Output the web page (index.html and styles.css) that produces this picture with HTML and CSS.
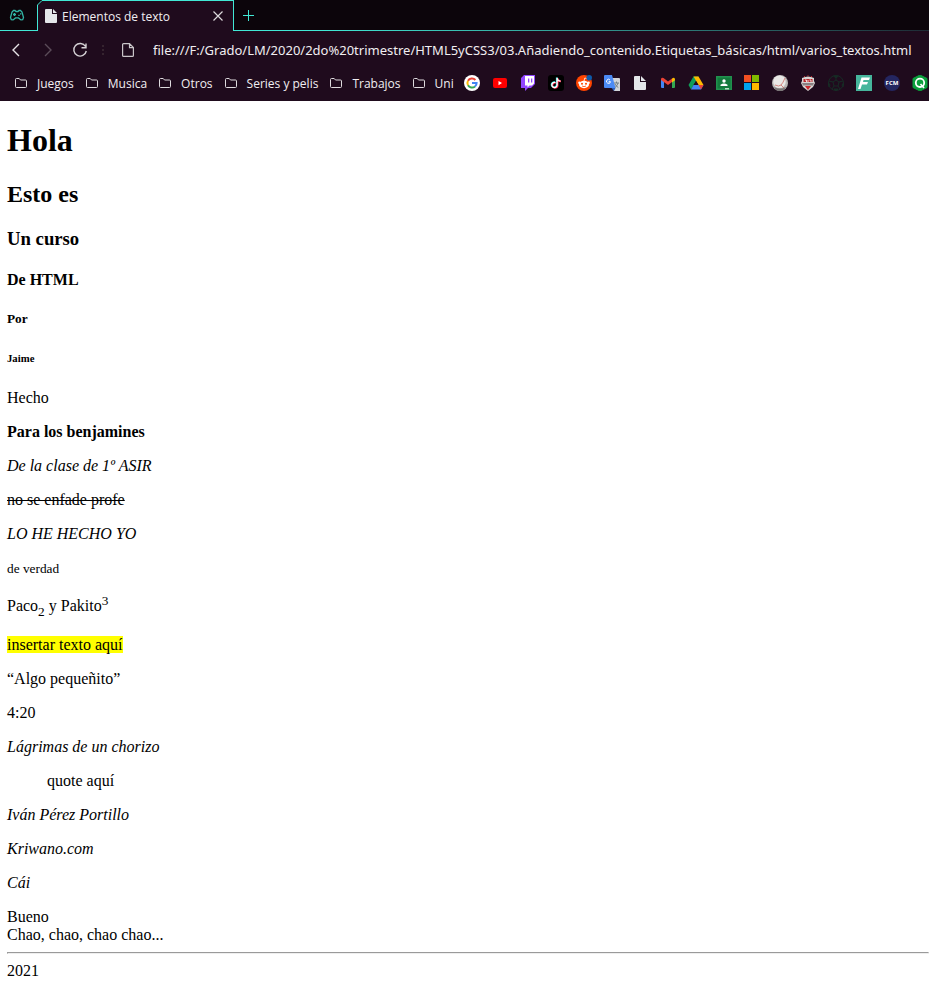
FILE: index.html
```html
<!DOCTYPE html>
<html lang="es">
<head>
<meta charset="utf-8">
<title>Elementos de texto</title>
<link rel="stylesheet" href="styles.css">
</head>
<body>
<header class="browser">
  <div class="tabs">
    <button class="corner" aria-label="GX Corner">
      <svg width="16" height="16" viewBox="0 0 16 16" fill="none" stroke="#32b5a5" stroke-width="1.3"><path d="M4.500 2.500H6l1 1h2l1-1h1.500l1.500 1.500 1.500 5.500-.8 2.200-1.800.2-2.400-2h-3l-2.400 2-1.800-.2L1.500 9.500 3 4z"/><path d="M4 6.500h3M5.500 5v3M9.300 7.300h1.400M11 5.800h1.400"/></svg>
    </button>
    <div class="tab">
      <svg class="slant" width="6" height="6" viewBox="0 0 6 6"><path d="M0 0h6L0 6z" fill="#0c050b"/><path d="M.5 6V5L5 .5h1" fill="none" stroke="#41e8d5"/></svg>
      <svg width="12" height="14" viewBox="0 0 12 14"><path d="M0 1q0-1 1-1h6v5h5v8q0 1-1 1H1q-1 0-1-1zM8 0l4 4H8z" fill="#e4e7ea"/></svg>
      <span class="tab-title">Elementos de texto</span>
      <button aria-label="Cerrar"><svg width="10" height="10" viewBox="0 0 10 10"><path d="M.5.5l9 9M9.500.5l-9 9" stroke="#dcd9dc" stroke-width="1.2"/></svg></button>
    </div>
    <button class="plus" aria-label="Nueva pestaña"><svg width="12" height="12" viewBox="0 0 12 12"><path d="M0 5.500h11M5.500 0v11" stroke="#41e8d5"/></svg></button>
  </div>
  <div class="toolbar">
    <button aria-label="Atrás"><svg width="16" height="16" viewBox="0 0 16 16" fill="none" stroke="#e6e3e6" stroke-width="1.4"><path d="M11 2L5 8l6 6"/></svg></button>
    <button aria-label="Adelante"><svg width="16" height="16" viewBox="0 0 16 16" fill="none" stroke="#5b4c59" stroke-width="1.4"><path d="M5 2l6 6-6 6"/></svg></button>
    <button aria-label="Recargar"><svg width="16" height="16" viewBox="0 0 16 16" fill="none" stroke="#d5d2d5" stroke-width="1.4"><path d="M13.500 4.500A6.300 6.300 0 1 0 14.300 9M14 1.500v4.300H9.500"/></svg></button>
    <svg class="dots" width="2" height="10" viewBox="0 0 2 10"><path d="M0 0h2v2H0zM0 4h2v2H0zM0 8h2v2H0z" fill="#35242f"/></svg>
    <svg width="12" height="14" viewBox="0 0 12 14" fill="none" stroke="#c9c5c9" stroke-width="1.200"><path d="M7.500.6H1.600q-1 0-1 1v10.800q0 1 1 1h8.800q1 0 1-1V4.500zM7.500.6v4h4"/></svg>
    <input class="url" type="text" aria-label="Dirección" value="file:///F:/Grado/LM/2020/2do%20trimestre/HTML5yCSS3/03.Añadiendo_contenido.Etiquetas_básicas/html/varios_textos.html">
  </div>
  <nav class="bookmarks" aria-label="Marcadores">
    <svg hidden><symbol id="folder" viewBox="0 0 12 10"><path d="M.5 8.500v-7q0-1 1-1h2.700l1.300 1.500h5q1 0 1 1v5.500q0 1-1 1h-9q-1 0-1-1z" fill="none" stroke="#dedbde"/></symbol></svg>
    <div class="folders">
      <a href="#"><svg width="12" height="10"><use href="#folder"/></svg>Juegos</a>
      <a href="#"><svg width="12" height="10"><use href="#folder"/></svg>Musica</a>
      <a href="#"><svg width="12" height="10"><use href="#folder"/></svg>Otros</a>
      <a href="#"><svg width="12" height="10"><use href="#folder"/></svg>Series y pelis</a>
      <a href="#"><svg width="12" height="10"><use href="#folder"/></svg>Trabajos</a>
      <a href="#"><svg width="12" height="10"><use href="#folder"/></svg>Uni</a>
    </div>
    <div class="sites">
      <a href="#" aria-label="Google"><svg width="16" height="16" viewBox="0 0 16 16" fill="none" stroke-width="2"><circle cx="8" cy="8" r="8" fill="#fff"/><path d="M11.400 5A4.600 4.600 0 0 0 4 5.800" stroke="#ea4335"/><path d="M4 5.800a4.600 4.600 0 0 0 0 4.400" stroke="#fbbc05"/><path d="M4 10.200a4.600 4.600 0 0 0 7 1.300" stroke="#34a853"/><path d="M11 11.500A4.600 4.600 0 0 0 12.600 8H8" stroke="#4285f4"/></svg></a>
      <a href="#" aria-label="YouTube"><svg width="16" height="16" viewBox="0 0 16 16"><rect x="1" y="3" width="14" height="10" rx="2" fill="#f00"/><path d="M6.500 6v4.200L10 8z" fill="#fff"/></svg></a>
      <a href="#" aria-label="Twitch"><svg width="16" height="16" viewBox="0 0 16 16"><path d="M4 0h11v9l-4 4H8l-3 3v-3H1V3z" fill="#9146ff"/><path d="M5 1h9v7.500L12 10.500H9.500L7.500 12.500v-2H5z" fill="#fff"/><path d="M8 3.500h1.300v4H8zM11 3.500h1.300v4H11z" fill="#9146ff"/></svg></a>
      <a href="#" aria-label="TikTok"><svg width="16" height="16" viewBox="0 0 16 16" fill="none" stroke-width="1.600"><rect width="16" height="16" rx="3" fill="#000"/><path d="M7 7.200a2.600 2.600 0 1 0 1.700 2.500V2.500c0 2 1.300 3.200 3.300 3.200" stroke="#25f4ee"/><path d="M8 7.900a2.600 2.600 0 1 0 1.700 2.500V3.200c0 2 1.300 3.200 3.300 3.200" stroke="#fe2c55"/><path d="M7.400 7.500a2.600 2.600 0 1 0 1.700 2.500V2.800c0 2 1.300 3.200 3.300 3.200" stroke="#fff" stroke-width="1.300"/></svg></a>
      <a href="#" aria-label="Reddit"><svg width="16" height="16" viewBox="0 0 16 16"><circle cx="8" cy="8" r="8" fill="#ff4500"/><circle cx="3.500" cy="7.800" r="1.300" fill="#fff"/><circle cx="12.500" cy="7.800" r="1.300" fill="#fff"/><ellipse cx="8" cy="9.500" rx="5" ry="3.700" fill="#fff"/><circle cx="6" cy="8.700" r="1" fill="#ff4500"/><circle cx="10" cy="8.700" r="1" fill="#ff4500"/><path d="M6 11q2 1.300 4 0" fill="none" stroke="#ff4500" stroke-width=".8"/><path d="M8 6l.8-3 2 .5" fill="none" stroke="#fff" stroke-width=".8"/><circle cx="13.200" cy="2.800" r="2.800" fill="#0d5bab"/></svg></a>
      <a href="#" aria-label="Traductor"><svg width="16" height="16" viewBox="0 0 16 16"><path d="M7 3h8q1 0 1 1v12H10z" fill="#d2d5d8"/><path d="M1 0h7l3.500 13H1q-1 0-1-1V1q0-1 1-1z" fill="#4c8bf5"/><path d="M7.500 13h4L10 16z" fill="#2c61bd"/><path d="M6 5A2 2 0 1 0 6.500 6.700H4.600" fill="none" stroke="#fff"/><path d="M10 8h5M12.500 6.500V8M14 8q-.7 3-3 4.500M11 9q1.300 2.500 3.300 3.500" fill="none" stroke="#687780" stroke-width=".9"/></svg></a>
      <a href="#" aria-label="Documento"><svg width="16" height="16" viewBox="0 0 16 16"><path d="M2 2q0-1 1-1h5v6h6v7q0 1-1 1H3q-1 0-1-1zM9 1l5 5H9z" fill="#e4e7ea"/></svg></a>
      <a href="#" aria-label="Gmail"><svg width="16" height="16" viewBox="0 0 16 16"><path d="M1 4l3 2v7H2q-1 0-1-1z" fill="#4285f4"/><path d="M12 6l3-2v8q0 1-1 1h-2z" fill="#34a853"/><path d="M1 4q.5-2 2.500-1L8 6.500 12 3.400V7L8 10 1 5z" fill="#ea4335"/><path d="M12 3.400q2.500-1.700 3 .8v1L12 7.500z" fill="#fbbc04"/></svg></a>
      <a href="#" aria-label="Drive"><svg width="16" height="16" viewBox="0 0 16 16"><path d="M5.500 1.500h5L8 6 3 14.500.5 10z" fill="#0f9d58"/><path d="M5.500 1.500h5L15.500 10h-5z" fill="#ffba00"/><path d="M5.500 10h10L13 14.500H3z" fill="#4285f4"/><path d="M10.500 10h5L13 14.500z" fill="#ea4335"/><path d="M8 6l2.500 4h-5z" fill="#200a1c"/></svg></a>
      <a href="#" aria-label="Classroom"><svg width="16" height="16" viewBox="0 0 16 16"><path d="M0 1h16v14H0z" fill="#21914e"/><path d="M1.500 2.500h13v11h-13z" fill="#137a3c"/><circle cx="8" cy="6" r="1.700" fill="#fff"/><path d="M4.500 11V9.800q3.500-2.500 7 0V11z" fill="#fff"/><path d="M9 13h4v1.500H9z" fill="#b7ddc5"/></svg></a>
      <a href="#" aria-label="Microsoft"><svg width="16" height="16" viewBox="0 0 16 16"><path d="M0 0h7v7H0z" fill="#f25022"/><path d="M8 0h7v7H8z" fill="#7fba00"/><path d="M0 8h7v7H0z" fill="#00a4ef"/><path d="M8 8h7v7H8z" fill="#ffb900"/></svg></a>
      <a href="#" aria-label="Béisbol"><svg width="16" height="16" viewBox="0 0 16 16"><circle cx="8" cy="8" r="8" fill="#b9b7b5"/><circle cx="7.500" cy="6.800" r="6.300" fill="#e9e8e6"/><path d="M3 10q4 2 6 0t4-7M9 10l3 3" fill="none" stroke="#c75b55" stroke-width=".7"/><path d="M2 12q6 3 12 0-2 4-6 4t-6-4z" fill="#777474"/></svg></a>
      <a href="#" aria-label="Club"><svg width="16" height="16" viewBox="0 0 16 16"><path d="M2 3q6-3 12 0v3l1 2-2 4-5 4-5-4-2-4 1-2z" fill="#d8d4d2"/><path d="M3.500 4h9v3h-9z" fill="#b82529"/><path d="M5 5h1.500v2M8 5v2M9.500 5H11v2" fill="none" stroke="#fff" stroke-width=".8"/><path d="M2 8h12l-1 2.500H3z" fill="#8b8284"/><path d="M5 11h6l-3 4z" fill="#c9292d"/><path d="M4 1.500h1M7.500.7h1M11 1.500h1" stroke="#c9292d"/></svg></a>
      <a href="#" aria-label="Fútbol"><svg width="16" height="16" viewBox="0 0 16 16" fill="none" stroke="#172b25"><circle cx="8" cy="8" r="7.500"/><path d="M8 5l3 2-1 4H6L5 7zM8 5V1M11 7l4-1M10 11l2 3M6 11l-2 3M5 7L1 6"/><path d="M5.500 1h5L8 3zM0 7l2 3-1 2zM16 7l-2 3 1 2zM6 14h4l-2 2z" fill="#172b25"/></svg></a>
      <a href="#" aria-label="Flashscore"><svg width="16" height="16" viewBox="0 0 16 16"><path d="M0 0h16v16H0z" fill="#46b69c"/><path d="M5.500 2.500H14L13 5H7.500L7 7h5l-1 2.500H6L4.500 14H2z" fill="#fff"/></svg></a>
      <a href="#" aria-label="FCM"><svg width="16" height="16" viewBox="0 0 16 16"><circle cx="8" cy="8" r="8" fill="#242660"/><text class="badge-text" x="8" y="10" text-anchor="middle">FCM</text></svg></a>
      <a href="#" aria-label="Q"><svg width="16" height="16" viewBox="0 0 16 16"><path d="M8 0l7 3.500v9L8 16l-7-3.500v-9z" fill="#0b9f3c" stroke="#0b9f3c" stroke-width="1"/><circle cx="8" cy="7.800" r="4.200" fill="none" stroke="#fff" stroke-width="1.800"/><path d="M8.500 9l3.500 4" stroke="#fff" stroke-width="1.600"/></svg></a>
    </div>
  </nav>
</header>
<main class="page">
  <h1>Hola</h1>
  <h2>Esto es</h2>
  <h3>Un curso</h3>
  <h4>De HTML</h4>
  <h5>Por</h5>
  <h6>Jaime</h6>
  <p>Hecho</p>
  <p><strong>Para los benjamines</strong></p>
  <p><em>De la clase de 1º ASIR</em></p>
  <p><del>no se enfade profe</del></p>
  <p><i>LO HE HECHO YO</i></p>
  <p><small>de verdad</small></p>
  <p>Paco<sub>2</sub> y Pakito<sup>3</sup></p>
  <p><mark>insertar texto aquí</mark></p>
  <p>“Algo pequeñito”</p>
  <p><time>4:20</time></p>
  <p><cite>Lágrimas de un chorizo</cite></p>
  <blockquote>quote aquí</blockquote>
  <address>Iván Pérez Portillo</address>
  <address>Kriwano.com</address>
  <address>Cái</address>
  <p class="last">Bueno<br>Chao, chao, chao chao...</p>
  <hr>
  <footer>2021</footer>
</main>
</body>
</html>
```
FILE: styles.css
```css
body {
  margin: 0;
  background: #fff;
  color: #000;
  font-family: "Liberation Serif", "Times New Roman", serif;
  font-size: 16px;
  overflow-x: hidden;
}

.browser {
  background: #1f0b1d;
  color: #f1eef1;
  font-family: "Open Sans", "Noto Sans", sans-serif;
  font-size: 12px;
}

.browser svg {
  display: block;
  flex: none;
}

.browser button {
  display: flex;
  align-items: center;
  justify-content: center;
  padding: 0;
  border: 0;
  background: none;
}

.tabs {
  display: flex;
  height: 31px;
  background:
    linear-gradient(90deg, #41e8d5 35%, #1f2b35) bottom / 100% 1px no-repeat,
    #0c050b;
}

.tabs .corner {
  width: 37px;
  padding-right: 4px;
}

.tab {
  position: relative;
  display: flex;
  align-items: center;
  box-sizing: border-box;
  width: 197px;
  padding: 0 10px 0 7px;
  border: 1px solid #41e8d5;
  border-bottom: 0;
  background: #1f0b1d;
}

.tab .slant {
  position: absolute;
  top: -1px;
  left: -1px;
}

.tab-title {
  flex: 1;
  margin-left: 5px;
  white-space: nowrap;
}

.tabs .plus {
  width: 30px;
}

.toolbar {
  display: flex;
  align-items: center;
  height: 37px;
  padding-left: 8px;
}

.toolbar button {
  width: 16px;
  margin-right: 16px;
}

.toolbar .dots {
  margin: 0 18px 0 -2px;
}

.url {
  flex: 1;
  min-width: 0;
  margin-left: 19px;
  padding: 0;
  border: 0;
  outline: 0;
  background: none;
  color: inherit;
  font-family: "Noto Sans", "Open Sans", sans-serif;
  font-size: 13px;
}

.bookmarks {
  display: flex;
  align-items: center;
  justify-content: space-between;
  gap: 10px;
  height: 30px;
  padding: 0 1px 3px 15px;
}

.bookmarks a {
  display: flex;
  align-items: center;
  gap: 10px;
  color: inherit;
  text-decoration: none;
  white-space: nowrap;
}

.browser .bookmarks svg[hidden] {
  display: none;
}

.folders,
.sites {
  display: flex;
  align-items: center;
  gap: 12px;
}

.badge-text {
  fill: #fff;
  font: bold 6px "Open Sans", sans-serif;
}

.page {
  display: flow-root;
  margin-left: 7px;
}

address {
  margin: 16px 0;
}

.last {
  margin-bottom: 8px;
}

hr {
  margin: 8px 0;
}
```
